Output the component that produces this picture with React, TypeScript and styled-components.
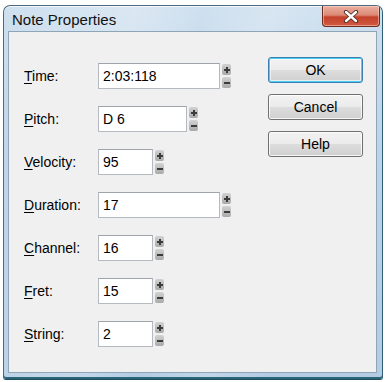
import React from "react";
import styled, { createGlobalStyle } from "styled-components";

const GlobalStyle = createGlobalStyle`
  html, body {
    margin: 0;
    padding: 0;
    background: #ffffff;
  }
  body {
    font-family: "Liberation Sans", Arial, sans-serif;
  }
`;

type Field = {
  label: string;
  key: string;
  value: string;
  width: number;
};

const fields: Field[] = [
  { label: "Time:", key: "T", value: "2:03:118", width: 122 },
  { label: "Pitch:", key: "P", value: "D 6", width: 89 },
  { label: "Velocity:", key: "V", value: "95", width: 55 },
  { label: "Duration:", key: "D", value: "17", width: 122 },
  { label: "Channel:", key: "C", value: "16", width: 55 },
  { label: "Fret:", key: "F", value: "15", width: 55 },
  { label: "String:", key: "S", value: "2", width: 55 },
];

export default function App() {
  return (
    <>
      <GlobalStyle />
      <Page>
        <Window>
          <TitleBar>
            <Title>Note Properties</Title>
            <CloseButton aria-label="Close">
              <svg width="16" height="13" viewBox="0 0 16 13">
                <path
                  d="M3 2 L13 11 M13 2 L3 11"
                  stroke="#4a2a24"
                  strokeWidth="4.2"
                  strokeLinecap="round"
                />
                <path
                  d="M3 2 L13 11 M13 2 L3 11"
                  stroke="#ffffff"
                  strokeWidth="2.4"
                  strokeLinecap="round"
                />
              </svg>
            </CloseButton>
          </TitleBar>
          <Client>
            <Fields>
              {fields.map((f) => (
                <Row key={f.label}>
                  <Label>
                    <u>{f.key}</u>
                    {f.label.slice(1)}
                  </Label>
                  <TextBox $width={f.width}>{f.value}</TextBox>
                  <Spinner>
                    <SpinButton>
                      <svg width="8" height="8" viewBox="0 0 8 8">
                        <path d="M4 1 V7 M1 4 H7" stroke="#3c3c3c" strokeWidth="2" />
                      </svg>
                    </SpinButton>
                    <SpinButton>
                      <svg width="8" height="8" viewBox="0 0 8 8">
                        <path d="M1 4 H7" stroke="#3c3c3c" strokeWidth="2" />
                      </svg>
                    </SpinButton>
                  </Spinner>
                </Row>
              ))}
            </Fields>
            <Buttons>
              <PushButton $default>OK</PushButton>
              <PushButton>Cancel</PushButton>
              <PushButton>Help</PushButton>
            </Buttons>
          </Client>
        </Window>
      </Page>
    </>
  );
}

const Page = styled.div`
  padding: 5px 4px 2px 3px;
`;

const Window = styled.div`
  width: 380px;
  height: 375px;
  box-sizing: border-box;
  display: flex;
  flex-direction: column;
  border: 1px solid #4d6a82;
  border-bottom-color: #1d4e60;
  border-right-color: #2f5f74;
  border-radius: 7px 7px 3px 3px;
  background: linear-gradient(
      100deg,
      rgba(255, 255, 255, 0) 0%,
      rgba(255, 255, 255, 0.25) 30%,
      rgba(255, 255, 255, 0) 45%,
      rgba(255, 255, 255, 0.2) 60%,
      rgba(255, 255, 255, 0) 75%
    ),
    linear-gradient(to bottom, #cfe0ef 0%, #bdd3e8 40%, #b3cce4 100%);
  box-shadow: inset 0 -2px 0 #2b6578, inset 0 1px 0 rgba(255, 255, 255, 0.7);
  overflow: hidden;
`;

const TitleBar = styled.div`
  height: 25px;
  display: flex;
  align-items: flex-start;
  padding-left: 8px;
  flex-shrink: 0;
`;

const Title = styled.div`
  font-size: 15px;
  color: #111111;
  padding-top: 5px;
  flex: 1;
`;

const CloseButton = styled.div`
  width: 58px;
  height: 21px;
  margin-right: 2px;
  box-sizing: border-box;
  display: flex;
  align-items: center;
  justify-content: center;
  border: 1px solid #6b2b20;
  border-top: none;
  border-radius: 0 0 4px 4px;
  background: linear-gradient(
    to bottom,
    #eab0a0 0%,
    #dc8a75 45%,
    #c4412b 55%,
    #d05a40 100%
  );
  box-shadow: inset 0 0 0 1px rgba(255, 220, 210, 0.5);
`;

const Client = styled.div`
  flex: 1;
  margin: 0 5px 6px 4px;
  background: #f0f0f0;
  border: 1px solid #8ea5b8;
  display: flex;
  align-items: flex-start;
`;

const Fields = styled.div`
  display: flex;
  flex-direction: column;
  gap: 17px;
  padding: 31px 0 0 15px;
`;

const Row = styled.div`
  display: flex;
  align-items: center;
  height: 26px;
`;

const Label = styled.div`
  width: 74px;
  font-size: 14px;
  color: #000000;
  u {
    text-decoration-thickness: 1px;
    text-underline-offset: 2px;
  }
`;

const TextBox = styled.div<{ $width: number }>`
  width: ${(p) => p.$width}px;
  height: 26px;
  box-sizing: border-box;
  background: #ffffff;
  border: 1px solid #b5b9c0;
  border-top-color: #9fa3aa;
  padding-left: 4px;
  font-size: 14px;
  line-height: 24px;
  color: #000000;
`;

const Spinner = styled.div`
  display: flex;
  flex-direction: column;
  gap: 2px;
  margin-left: 2px;
  height: 24px;
`;

const SpinButton = styled.div`
  width: 9px;
  height: 11px;
  display: flex;
  align-items: center;
  justify-content: center;
  border-radius: 2px;
  background: linear-gradient(to bottom, #d2d2d2, #a9a9a9);
  svg {
    display: block;
  }
`;

const Buttons = styled.div`
  margin-left: auto;
  margin-right: 13px;
  padding-top: 25px;
  display: flex;
  flex-direction: column;
  gap: 11px;
`;

const PushButton = styled.div<{ $default?: boolean }>`
  width: 95px;
  height: 26px;
  box-sizing: border-box;
  display: flex;
  align-items: center;
  justify-content: center;
  font-size: 14px;
  color: #000000;
  border: 1px solid ${(p) => (p.$default ? "#3c7fb1" : "#707070")};
  border-radius: 3px;
  background: linear-gradient(
    to bottom,
    #f2f2f2 0%,
    #ebebeb 50%,
    #dddddd 51%,
    #cfcfcf 100%
  );
  box-shadow: ${(p) =>
    p.$default
      ? "inset 0 0 0 1px #48d0f4, inset 0 0 0 2px rgba(255,255,255,0.6)"
      : "inset 0 0 0 1px rgba(255,255,255,0.8)"};
`;
